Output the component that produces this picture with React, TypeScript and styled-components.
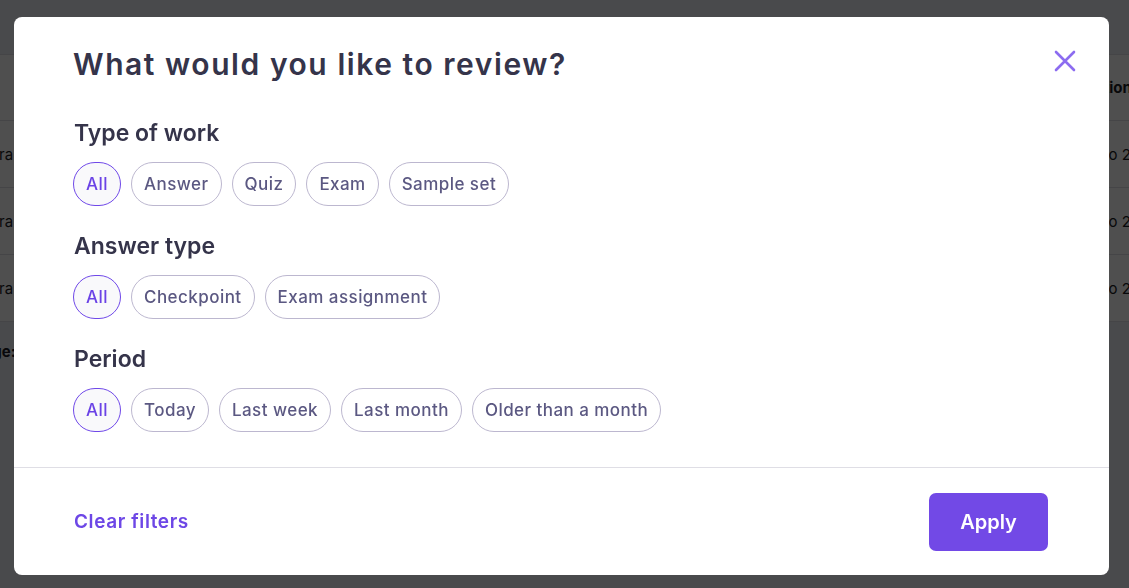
import React, { useState } from "react";
import styled, { createGlobalStyle } from "styled-components";

const GlobalStyle = createGlobalStyle`
  html, body {
    margin: 0;
    padding: 0;
    width: 100%;
    height: 100%;
    overflow: hidden;
  }
  body {
    font-family: Inter, "Noto Sans", sans-serif;
    background: #eceef5;
  }
`;

/* page behind the dialog */
const Page = styled.div`
  height: 588px;
  background: #eceef5;
`;

const TopBar = styled.div`
  height: 54px;
`;

const Table = styled.div`
  background: #ffffff;
`;

const Row = styled.div<{ $head?: boolean }>`
  display: grid;
  grid-template-columns: 1fr 40px;
  align-items: center;
  height: ${(p) => (p.$head ? "65px" : "66px")};
  border-top: 1px solid #dedfe6;
  font-size: 15px;
  font-weight: ${(p) => (p.$head ? 700 : 400)};
  color: #1c1c24;
  &:last-child {
    border-bottom: 1px solid #dedfe6;
  }
`;

const LeadCell = styled.span`
  margin-left: -19px;
`;

const TailCell = styled.span<{ $shift?: number }>`
  margin-left: ${(p) => p.$shift ?? 0}px;
  white-space: nowrap;
`;

const PageNote = styled.div`
  margin: 20px 0 0 -26px;
  font-size: 15px;
  font-weight: 700;
  color: #1c1c24;
`;

/* dialog */
const Overlay = styled.div`
  position: fixed;
  inset: 0;
  display: flex;
  padding: 17px 20px 13px 14px;
  background: rgba(0, 0, 0, 0.69);
`;

const Modal = styled.div`
  flex: 1;
  display: flex;
  flex-direction: column;
  background: #ffffff;
  border-radius: 8px;
  color: #35344a;
`;

const Header = styled.div`
  display: flex;
  justify-content: space-between;
  align-items: flex-start;
  padding: 29px 32px 0 59px;
`;

const Title = styled.h1`
  margin: 0;
  font-size: 30px;
  line-height: 36px;
  font-weight: 600;
  letter-spacing: 1.55px;
`;

const CloseButton = styled.button`
  width: 24px;
  height: 24px;
  margin-top: 3px;
  padding: 0;
  border: none;
  background: none;
  color: #8c6cf0;
  cursor: pointer;
  display: flex;
  align-items: center;
  justify-content: center;
`;

const Body = styled.div`
  display: flex;
  flex-direction: column;
  gap: 26px;
  padding: 37px 59px 35px;
  border-bottom: 1px solid #dfdee5;
`;

const Section = styled.section`
  display: flex;
  flex-direction: column;
  gap: 15px;
`;

const Label = styled.h2`
  margin: 0 0 0 1px;
  font-size: 23px;
  line-height: 28px;
  font-weight: 600;
`;

const ChipRow = styled.div`
  display: flex;
  gap: 10px;
`;

const Chip = styled.button<{ $active?: boolean }>`
  height: 44px;
  padding: 0 12px;
  border-radius: 22px;
  border: 1px solid ${(p) => (p.$active ? "#6f48e8" : "#bcb7cf")};
  background: ${(p) => (p.$active ? "#f9f9fb" : "#ffffff")};
  color: ${(p) => (p.$active ? "#6b43e6" : "#5b5882")};
  font-family: Inter, "Noto Sans", sans-serif;
  font-size: 17px;
  font-weight: 500;
  letter-spacing: 0.45px;
  cursor: pointer;
`;

const Footer = styled.div`
  flex: 1;
  display: flex;
  align-items: center;
  justify-content: space-between;
  padding: 0 61px 0 60px;
`;

const ClearLink = styled.button`
  padding: 0;
  border: none;
  background: none;
  font-family: Inter, "Noto Sans", sans-serif;
  font-size: 19px;
  font-weight: 600;
  letter-spacing: 0.6px;
  color: #6d47e6;
  cursor: pointer;
`;

const ApplyButton = styled.button`
  width: 119px;
  height: 58px;
  border: none;
  border-radius: 7px;
  background: #7249e6;
  color: #ffffff;
  font-family: Inter, "Noto Sans", sans-serif;
  font-size: 20px;
  font-weight: 600;
  cursor: pointer;
`;

const groups = [
  { label: "Type of work", options: ["All", "Answer", "Quiz", "Exam", "Sample set"] },
  { label: "Answer type", options: ["All", "Checkpoint", "Exam assignment"] },
  { label: "Period", options: ["All", "Today", "Last week", "Last month", "Older than a month"] },
];

const App = () => {
  const [picked, setPicked] = useState<string[]>(groups.map(() => "All"));

  return (
    <>
      <GlobalStyle />
      <Page>
        <TopBar />
        <Table>
          <Row $head>
            <LeadCell />
            <TailCell $shift={-5}>Action</TailCell>
          </Row>
          {[0, 1, 2].map((i) => (
            <Row key={i}>
              <LeadCell>Sara</LeadCell>
              <TailCell>Ago 2024</TailCell>
            </Row>
          ))}
        </Table>
        <PageNote>Page:</PageNote>
      </Page>

      <Overlay>
        <Modal>
          <Header>
            <Title>What would you like to review?</Title>
            <CloseButton aria-label="Close">
              <svg width="22" height="22" viewBox="0 0 22 22" fill="none">
                <path d="M2 2L20 20M20 2L2 20" stroke="currentColor" strokeWidth="2.6" strokeLinecap="round" />
              </svg>
            </CloseButton>
          </Header>
          <Body>
            {groups.map((g, gi) => (
              <Section key={g.label}>
                <Label>{g.label}</Label>
                <ChipRow>
                  {g.options.map((o) => (
                    <Chip
                      key={o}
                      $active={picked[gi] === o}
                      onClick={() => setPicked((p) => p.map((v, i) => (i === gi ? o : v)))}
                    >
                      {o}
                    </Chip>
                  ))}
                </ChipRow>
              </Section>
            ))}
          </Body>
          <Footer>
            <ClearLink onClick={() => setPicked(groups.map(() => "All"))}>Clear filters</ClearLink>
            <ApplyButton>Apply</ApplyButton>
          </Footer>
        </Modal>
      </Overlay>
    </>
  );
};

export default App;
